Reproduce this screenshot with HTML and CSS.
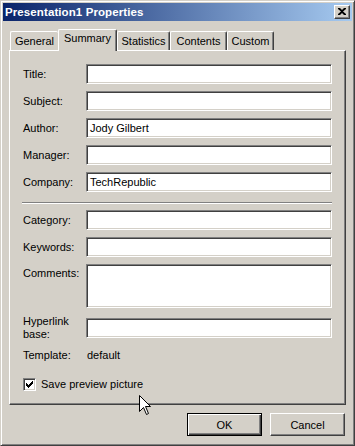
FILE: index.html
```html
<!DOCTYPE html>
<html>
<head>
<meta charset="utf-8">
<link rel="stylesheet" href="styles.css">
</head>
<body>
<div class="window">
  <div class="titlebar">
    <span class="title">Presentation1 Properties</span>
    <div class="close">
      <svg width="8" height="7" viewBox="0 0 8 7"><path d="M0 0h2l2 2 2-2h2v1L5 3.5 8 6v1H6L4 5 2 7H0V6l3-2.5L0 1z" fill="#000"/></svg>
    </div>
  </div>
  <div class="tabs">
    <div class="tab t-general">General</div>
    <div class="tab selected t-summary">Summary</div>
    <div class="tab t-stats">Statistics</div>
    <div class="tab t-contents">Contents</div>
    <div class="tab t-custom">Custom</div>
  </div>
  <div class="panel">
    <div class="form">
      <span class="lbl">Title:</span><div class="input"></div>
      <span class="lbl">Subject:</span><div class="input"></div>
      <span class="lbl">Author:</span><div class="input">Jody Gilbert</div>
      <span class="lbl">Manager:</span><div class="input"></div>
      <span class="lbl">Company:</span><div class="input">TechRepublic</div>
    </div>
    <div class="sep"></div>
    <div class="form">
      <span class="lbl">Category:</span><div class="input"></div>
      <span class="lbl">Keywords:</span><div class="input"></div>
      <span class="lbl top">Comments:</span><div class="input tall"></div>
      <span class="lbl two">Hyperlink<br>base:</span><div class="input"></div>
      <span class="lbl">Template:</span><span class="value">default</span>
    </div>
    <div class="check-row">
      <div class="checkbox">
        <svg width="7" height="7" viewBox="0 0 7 7"><path d="M0 2h1v1h1v1h1V3h1V2h1V1h1V0h1v3H6v1H5v1H4v1H3v1H2V6H1V5H0z" fill="#000"/></svg>
      </div>
      <span>Save preview picture</span>
    </div>
  </div>
  <div class="buttons">
    <div class="btn default">OK</div>
    <div class="btn">Cancel</div>
  </div>
  <svg class="cursor" width="13" height="21" viewBox="0 0 13 21"><path d="M0.5 0.5V16.5L4.5 12.5L7.5 19.5L9.5 18.5L6.5 11.5H11.5Z" fill="#fff" stroke="#000" stroke-width="1"/></svg>
</div>
</body>
</html>
```

FILE: styles.css
```css
* { box-sizing: border-box; }
html, body { margin: 0; padding: 0; background: #D4D0C8; }
body {
  font-family: "Liberation Sans", Arial, sans-serif;
  font-size: 11px;
  color: #000;
}
.window {
  position: relative;
  width: 355px;
  height: 446px;
  background: #D4D0C8;
  border: 1px solid;
  border-color: #D4D0C8 #404040 #404040 #D4D0C8;
  box-shadow: inset 1px 1px #fff, inset -1px -1px #808080;
  padding: 2px 2px 2px 2px;
  display: flex;
  flex-direction: column;
}
.titlebar {
  height: 18px;
  background: linear-gradient(to right, #0A246A, #A6CAF0);
  display: flex;
  align-items: center;
  justify-content: space-between;
  padding: 0 2px 0 2px;
}
.title {
  color: #fff;
  font-weight: bold;
  font-size: 11.5px;
  letter-spacing: 0.1px;
}
.close {
  width: 16px;
  height: 14px;
  background: #D4D0C8;
  border: 1px solid;
  border-color: #fff #404040 #404040 #fff;
  box-shadow: inset -1px -1px #808080;
  display: flex;
  align-items: center;
  justify-content: center;
  padding-bottom: 1px;
}
.tabs {
  margin-top: 8px;
  height: 21px;
  display: flex;
  align-items: flex-end;
  padding-left: 7px;
}
.tab {
  height: 19px;
  border-top: 1px solid #fff;
  border-left: 1px solid #fff;
  border-right: 1px solid #404040;
  box-shadow: inset -1px 0 #808080;
  border-radius: 2px 2px 0 0;
  display: flex;
  align-items: center;
  justify-content: center;
  padding-bottom: 1px;
  background: #D4D0C8;
}
.tab.selected {
  height: 22px;
  margin-bottom: -1px;
  position: relative;
  z-index: 2;
  padding-bottom: 5px;
}
.t-general { width: 48px; border-right: none; box-shadow: none; }
.t-summary { width: 59px; }
.t-stats { width: 53px; }
.t-contents { width: 57px; }
.t-custom { width: 47px; }
.panel {
  margin: 0 6px 0 6px;
  height: 355px;
  border: 1px solid;
  border-color: #fff #404040 #404040 #fff;
  box-shadow: inset -1px -1px #808080;
  padding: 13px 14px 0 13px;
}
.form {
  display: grid;
  grid-template-columns: 63px 246px;
  row-gap: 7px;
  align-items: center;
}
.lbl { line-height: 13px; }
.lbl.top { align-self: start; padding-top: 3px; }
.input {
  height: 20px;
  background: #fff;
  border: 1px solid;
  border-color: #808080 #fff #fff #808080;
  box-shadow: inset 1px 1px #404040, inset -1px -1px #D4D0C8;
  padding: 2px 0 0 3px;
  line-height: 15px;
}
.input.tall { height: 44px; }
.value { padding-left: 1px; line-height: 14px; }
.sep {
  margin: 10px 0 6px -1px;
  width: 310px;
  height: 2px;
  border-top: 1px solid #808080;
  border-bottom: 1px solid #fff;
}
.check-row {
  margin-top: 16px;
  display: flex;
  align-items: center;
  gap: 5px;
  line-height: 13px;
}
.checkbox {
  width: 13px;
  height: 13px;
  background: #fff;
  border: 1px solid;
  border-color: #808080 #fff #fff #808080;
  box-shadow: inset 1px 1px #404040, inset -1px -1px #D4D0C8;
  display: flex;
  align-items: center;
  justify-content: center;
}
.buttons {
  margin-top: 8px;
  display: flex;
  justify-content: flex-end;
  gap: 8px;
  padding-right: 7px;
}
.btn {
  width: 75px;
  height: 23px;
  border: 1px solid;
  border-color: #fff #404040 #404040 #fff;
  box-shadow: inset -1px -1px #808080;
  display: flex;
  align-items: center;
  justify-content: center;
}
.btn.default {
  border-color: #000;
  box-shadow: inset 1px 1px #fff, inset -1px -1px #404040, inset -2px -2px #808080;
}
.cursor {
  position: absolute;
  left: 138px;
  top: 394px;
}
```
